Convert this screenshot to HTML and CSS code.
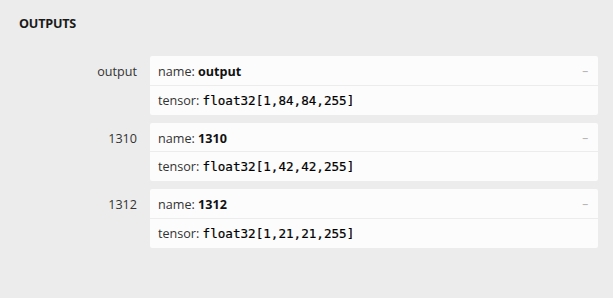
FILE: index.html
```html
<!DOCTYPE html>
<html>
<head>
<meta charset="utf-8">
<link rel="stylesheet" href="styles.css">
</head>
<body>
<div class="sidebar">
  <div class="header">OUTPUTS</div>
  <div class="items">
    <div class="item">
      <div class="item-name">output</div>
      <div class="value">
        <div class="line first"><span>name: <b>output</b></span><span class="expander">&minus;</span></div>
        <div class="line border">tensor: <code>float32[1,84,84,255]</code></div>
      </div>
    </div>
    <div class="item">
      <div class="item-name">1310</div>
      <div class="value">
        <div class="line first"><span>name: <b>1310</b></span><span class="expander">&minus;</span></div>
        <div class="line border">tensor: <code>float32[1,42,42,255]</code></div>
      </div>
    </div>
    <div class="item">
      <div class="item-name">1312</div>
      <div class="value">
        <div class="line first"><span>name: <b>1312</b></span><span class="expander">&minus;</span></div>
        <div class="line border">tensor: <code>float32[1,21,21,255]</code></div>
      </div>
    </div>
  </div>
</div>
</body>
</html>
```
FILE: styles.css
```css
html, body {
  margin: 0;
  padding: 0;
  background: #ececec;
}
body {
  width: 613px;
  height: 298px;
  overflow: hidden;
  font-family: "Open Sans", "Noto Sans", sans-serif;
  font-size: 12.6px;
  color: #333;
}
.sidebar {
  padding: 0 15px 0 0;
}
.header {
  font-weight: bold;
  font-size: 12.6px;
  color: #1a1a1a;
  padding: 15px 0 0 19px;
  height: 20px;
  line-height: 18px;
  letter-spacing: -0.2px;
}
.items {
  margin-top: 21px;
  display: flex;
  flex-direction: column;
  gap: 8px;
}
.item {
  display: grid;
  grid-template-columns: 150px 448px;
}
.item-name {
  text-align: right;
  padding-right: 13px;
  padding-top: 7px;
  line-height: 18px;
  color: #333;
}
.value {
  background: #fcfcfc;
  border-radius: 2px;
  overflow: hidden;
}
.line {
  padding: 0 8px;
  box-sizing: border-box;
}
.line.first {
  display: flex;
  justify-content: space-between;
  height: 28.5px;
  line-height: 31px;
}
.line.border {
  border-top: 1px solid #ececec;
  height: 30px;
  line-height: 29px;
}
b {
  font-weight: bold;
  color: #111;
}
code {
  font-family: "DejaVu Sans Mono", monospace;
  font-size: 12.6px;
  color: #000;
  -webkit-text-stroke: 0.2px #000;
}
.expander {
  color: #aaa;
  font-family: "DejaVu Sans Mono", monospace;
  font-size: 10px;
  padding-right: 2px;
}
```
